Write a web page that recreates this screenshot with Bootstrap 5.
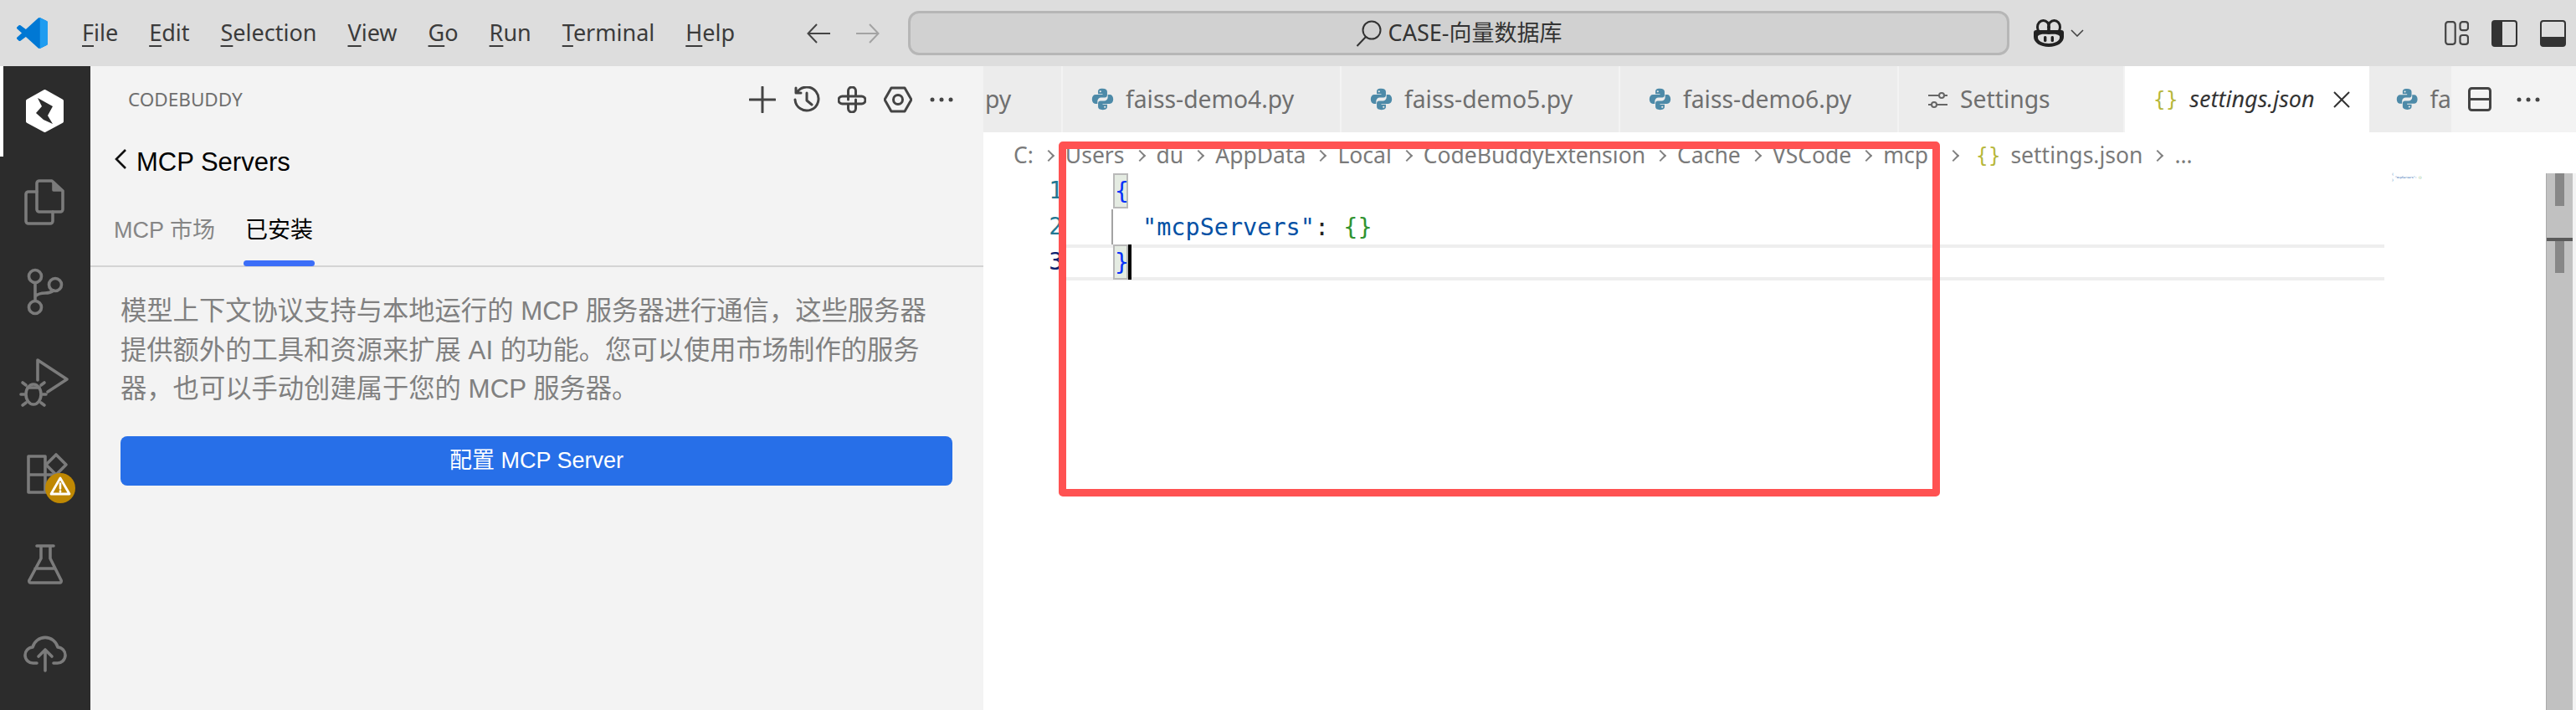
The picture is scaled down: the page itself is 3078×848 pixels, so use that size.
<!DOCTYPE html>
<html lang="en">
<head>
<meta charset="utf-8">
<title>CASE-向量数据库</title>
<link href="https://cdn.jsdelivr.net/npm/bootstrap@5.3.0/dist/css/bootstrap.min.css" rel="stylesheet">
<style>
:root{--ui:"Noto Sans","Noto Sans CJK SC",sans-serif;--ar:"Liberation Sans","Noto Sans CJK SC",sans-serif;}
html,body{margin:0;height:100%;overflow:hidden;background:#fff;}
.shell{width:3078px;height:848px;font-family:var(--ui);}
.tbar{height:79px;background:#ddd;color:#3b3b3b;font-size:27px;}
.vs-logo{width:37px;height:37px;margin-left:20px;}
.menu-items{margin-left:41px;gap:37px;width:780px;}
.menu-items u{text-underline-offset:5px;text-decoration-thickness:2px;}
.nav-arrows{margin-left:86px;gap:30px;width:87px;}
.cmd{width:1316px;height:53px;margin-left:34px;background:#d1d1d1;border:3px solid #b6b6b6;border-radius:13px;color:#333;}
.copilot{margin-left:29px;}
.lay-icons{margin-left:431px;gap:27px;}
.wk{height:769px;}
.activity{width:108px;background:#2c2c2c;}
.act-slot{height:108px;width:108px;}
.act-slot svg{display:block;fill:none;stroke:#7b7b7b;stroke-width:3.6;stroke-linecap:round;stroke-linejoin:round;}
.act-on{box-shadow:inset 4px 0 0 #fff;}
.side{width:1067px;background:#f3f3f3;font-family:var(--ar);}
.side-head{height:79px;padding:0 36px 0 45px;}
.side-title{font-family:var(--ui);font-size:22.5px;color:#6f6f6f;margin:0;}
.side-icons{gap:21px;}
.side-icons svg{fill:none;stroke:#444;stroke-width:3;stroke-linecap:round;stroke-linejoin:round;}
.back-row{height:72px;padding-left:29px;color:#000;font-size:31px;gap:12px;}
.side-tabs{height:89px;border-bottom:2px solid #d4d4d4;padding-left:28px;gap:36px;font-size:27px;}
.stab{height:87px;padding-top:25px;position:relative;color:#868686;}
.stab-on{color:#000;}
.stab-on::after{content:"";position:absolute;left:-2px;right:-2px;bottom:-1px;height:7px;border-radius:4px;background:#3b6ef8;}
.side-desc{margin:30px 0 0 36px;color:#808080;font-size:31.3px;line-height:46.5px;width:985px;}
.cfg-btn{display:block;margin:32px 37px 0 36px;height:59px;width:994px;background:#276fe8;border:0;border-radius:8px;color:#fff;font-size:27px;line-height:59px;padding:0;}
.edgrp{width:1903px;}
.tabstrip{height:79px;background:#f3f3f3;font-size:28.3px;color:#6f6f6f;}
.etab{height:79px;background:#ececec;border-right:2px solid #f3f3f3;padding-left:33px;gap:13px;white-space:nowrap;overflow:hidden;}
.etab-py{width:95px;padding-left:2px;}
.etab-w{width:333px;}
.etab-s{width:270px;padding-left:35px;gap:15px;}
.etab-on{width:292px;background:#fff;border:0;color:#333;font-size:27px;padding-left:34px;gap:14px;}
.etab-fa{width:98px;border:0;padding-left:31px;}
.strip-acts{padding-left:20px;gap:30px;}
.strip-acts svg{fill:none;stroke:#444;stroke-width:3;}
.crumbs{height:49px;padding:7px 0 0 36px;font-size:26.5px;color:#7a7a7a;gap:12px;white-space:nowrap;}
.editor{height:641px;}
.gutter{width:95px;font-family:"DejaVu Sans Mono",monospace;font-size:28px;line-height:42.7px;color:#237893;text-align:right;}
.gutter span{display:block;height:42.7px;}
.gutter .cur{color:#0b216f;}
.code{width:1579px;font-family:"DejaVu Sans Mono",monospace;font-size:28.5px;line-height:44px;}
.cline{height:42.7px;padding-left:60px;white-space:pre;position:relative;}
.cline-mid{padding-left:95px;}
.guide{position:absolute;left:58px;top:0;bottom:0;width:2px;background:#a3a3a3;}
.cline-cur{border-top:4px solid #eee;border-bottom:4px solid #eee;line-height:34px;}
.bm{display:inline-block;width:18px;height:42px;line-height:39px;background:#e4ebe2;border:2px solid #b9b9b9;overflow:visible;color:#0431fa;text-align:center;font-size:28px;vertical-align:top;}
.cline-cur .bm{margin-top:-4px;}
.caret{display:inline-block;width:4px;height:42px;background:#000;vertical-align:top;margin-top:-4px;}
.k{color:#0451a5;}.p{color:#222;}.g{color:#319331;}
.mmap{width:193px;padding:0 0 0 9px;font-family:"DejaVu Sans Mono",monospace;font-size:3.3px;line-height:3.7px;white-space:pre;color:#0451a5;}
.sbar{width:32px;background:#c1c1c1;border-left:1px solid #aaa;position:relative;}
.sb-mark{position:absolute;left:10px;width:11px;background:#878787;}
.sb-m1{top:0;height:39px;}
.sb-m2{top:79px;height:40px;}
.sb-line{position:absolute;left:0;right:0;top:77px;height:4px;background:#5a5a5a;}
.edge{width:4px;background:#f3f3f3;}
.callout{position:absolute;left:1265px;top:169px;width:1053px;height:424px;border:9px solid #ff5252;border-radius:5px;pointer-events:none;}
.sep{display:inline-block;width:10px;height:10px;border-top:2px solid #808080;border-right:2px solid #808080;transform:rotate(45deg);margin:0 3px 0 1px;flex-shrink:0;}
.sep-w{margin:0 10px 0 13px;}
.brc{color:#b7b73b;font-family:"DejaVu Sans Mono",monospace;font-size:24px;letter-spacing:-7px;margin-right:7px;}
</style>
</head>
<body>
<div class="shell position-relative d-flex flex-column">

  <header class="tbar d-flex align-items-center flex-shrink-0">
    <svg class="vs-logo flex-shrink-0" viewBox="0 0 100 100"><path fill="#0078d4" d="M70.9 99.3a6.2 6.2 0 0 0 5-.2l20.6-9.9A6.2 6.2 0 0 0 100 83.5V16.5a6.2 6.2 0 0 0-3.5-5.6L75.9.9a6.2 6.2 0 0 0-7.1 1.2L29.4 38 12.2 25a4.2 4.2 0 0 0-5.3.2l-5.5 5a4.2 4.2 0 0 0 0 6.2L16.3 50 1.4 63.6a4.2 4.2 0 0 0 0 6.2l5.5 5a4.2 4.2 0 0 0 5.3.2l17.2-13 39.4 35.9a6.2 6.2 0 0 0 2.1 1.4zM75 27.3 45.1 50 75 72.7z"/><path fill="#1f9cf0" d="M71 99.4a6.2 6.2 0 0 0 4.9-.3l20.6-9.9A6.2 6.2 0 0 0 100 83.5V16.5a6.2 6.2 0 0 0-3.5-5.6L75.9.9A6.2 6.2 0 0 0 71 .6 6 6 0 0 1 75 6v88a6 6 0 0 1-4 5.4z"/></svg>
    <nav class="menu-items d-flex flex-shrink-0">
      <span><u>F</u>ile</span><span><u>E</u>dit</span><span><u>S</u>election</span><span><u>V</u>iew</span><span><u>G</u>o</span><span><u>R</u>un</span><span><u>T</u>erminal</span><span><u>H</u>elp</span>
    </nav>
    <div class="nav-arrows d-flex align-items-center flex-shrink-0">
      <svg width="29" height="24" viewBox="0 0 29 24" fill="none" stroke="#444" stroke-width="2"><path d="M28 12H2M12 1 1.5 12 12 23"/></svg>
      <svg width="28" height="24" viewBox="0 0 28 24" fill="none" stroke="#a3a3a3" stroke-width="2"><path d="M0 12h26M16 1l10.5 11L16 23"/></svg>
    </div>
    <div class="cmd d-flex align-items-center justify-content-center gap-2 flex-shrink-0">
      <svg width="31" height="32" viewBox="0 0 31 32" fill="none" stroke="#333" stroke-width="2"><circle cx="19" cy="12" r="10.5"/><path d="M12 20 1.5 31"/></svg>
      <span>CASE-向量数据库</span>
    </div>
    <svg class="copilot flex-shrink-0" width="36" height="33" viewBox="0 0 36 33"><ellipse cx="11.5" cy="9.5" rx="7" ry="8" fill="none" stroke="#222" stroke-width="3"/><ellipse cx="24.5" cy="9.5" rx="7" ry="8" fill="none" stroke="#222" stroke-width="3"/><path fill="#222" d="M3 13h30a3 3 0 0 1 3 3v5c0 7-8 12-18 12S0 28 0 21v-5a3 3 0 0 1 3-3z"/><path fill="#ddd" d="M5 20c4-3 7-2 13-2s9-1 13 2v2c0 4-6 7-13 7S5 26 5 22z"/><rect x="12" y="20" width="3.4" height="7" rx="1.5" fill="#222"/><rect x="20.6" y="20" width="3.4" height="7" rx="1.5" fill="#222"/></svg>
    <svg class="flex-shrink-0 ms-2" width="16" height="9" viewBox="0 0 16 9" fill="none" stroke="#444" stroke-width="1.6"><path d="M1 1l7 7 7-7"/></svg>
    <div class="lay-icons d-flex align-items-center flex-shrink-0">
      <svg width="29" height="29" viewBox="0 0 29 29" fill="none" stroke="#444" stroke-width="2.2"><rect x="1.2" y="1.2" width="11.5" height="26.6" rx="3"/><rect x="18.5" y="1.2" width="9.5" height="10" rx="3"/><rect x="18.5" y="17" width="9.5" height="10.8" rx="3"/></svg>
      <svg width="31" height="32" viewBox="0 0 31 32"><rect x="1" y="1" width="29" height="30" rx="3" fill="none" stroke="#333" stroke-width="2"/><path fill="#333" d="M1 4a3 3 0 0 1 3-3h9v30H4a3 3 0 0 1-3-3z"/></svg>
      <svg width="31" height="32" viewBox="0 0 31 32"><rect x="1" y="1" width="29" height="30" rx="3" fill="none" stroke="#333" stroke-width="2"/><path fill="#333" d="M1 20h29v8a3 3 0 0 1-3 3H4a3 3 0 0 1-3-3z"/></svg>
    </div>
  </header>

  <div class="wk d-flex">
    <aside class="activity flex-shrink-0">
      <div class="act-slot act-on"><svg width="108" height="108" viewBox="0 0 108 108"><path style="stroke:#fff;fill:#fff;stroke-width:4" d="M53.5 30 74 41.500V66L53.500 77 33 66V41.500z"/><path style="stroke:none;fill:#2c2c2c" d="M45 38 63 48 57 59 63 69 52 64 43 56 50 48z"/></svg></div>
      <div class="act-slot"><svg width="108" height="108" viewBox="0 0 108 108"><path d="M47 29h15l13 12v22a3 3 0 0 1-3 3H47a3 3 0 0 1-3-3V32a3 3 0 0 1 3-3z"/><path style="fill:#7b7b7b" d="M64 31v9h9z"/><path d="M44 42H34a3 3 0 0 0-3 3v32a3 3 0 0 0 3 3h26a3 3 0 0 0 3-3V66"/></svg></div>
      <div class="act-slot"><svg width="108" height="108" viewBox="0 0 108 108"><circle cx="42" cy="35" r="7.500"/><circle cx="42" cy="72" r="7.500"/><circle cx="66" cy="45" r="7.500"/><path d="M42 42.500V64M42 59c3-3 6-4 12-4 5 0 8-1.500 10-3"/></svg></div>
      <div class="act-slot"><svg width="108" height="108" viewBox="0 0 108 108"><path d="M45 51V27L80 50 57 65"/><ellipse cx="40" cy="68" rx="9" ry="12"/><path d="M31 57l-4-3M49 57l4-3M29 68h-4M51 68h4M31 78l-4 3M49 78l4 3M33 60h14"/></svg></div>
      <div class="act-slot"><svg width="108" height="108" viewBox="0 0 108 108"><path d="M34 34h20v43H34zM34 56h32M54 56v21h12V56"/><path d="M67 32 79 44 67 56 55 44z"/><circle cx="72" cy="72" r="18" style="fill:#bf8803;stroke:none"/><path style="stroke:#fff;stroke-width:2.800" d="M72 60 61 79h22z"/><path style="stroke:#fff;stroke-width:2.600" d="M72 66.500v6M72 75.500v1"/></svg></div>
      <div class="act-slot"><svg width="108" height="108" viewBox="0 0 108 108"><path d="M44 33h20M49 33v15L35 74a2 2 0 0 0 2 3h34a2 2 0 0 0 2-3L60 48V33M42 60h24"/></svg></div>
      <div class="act-slot"><svg width="108" height="108" viewBox="0 0 108 108"><path d="M44 65H40a9.500 9.500 0 0 1-1-19 15.500 15.500 0 0 1 30 0 9.500 9.500 0 0 1-1 19H64"/><path d="M54 74V49M46 57l8-8 8 8"/></svg></div>
    </aside>

    <section class="side flex-shrink-0">
      <div class="side-head d-flex align-items-center justify-content-between">
        <h2 class="side-title fw-normal">CODEBUDDY</h2>
        <div class="side-icons d-flex align-items-center">
          <svg width="32" height="32" viewBox="0 0 32 32"><path d="M16 1v30M1 16h30"/></svg>
          <svg width="32" height="32" viewBox="0 0 32 32"><path d="M4.500 7A14 14 0 1 1 2 16M3 2v6h6M16 8v9l6 5"/></svg>
          <svg width="34" height="32" viewBox="0 0 34 32"><path d="M12.500 16V5.500a4.500 4.500 0 0 1 9 0V12M12.500 12h16a4.500 4.500 0 0 1 0 9H22M21.500 16v10.500a4.500 4.500 0 0 1-9 0V21M21.500 21h-16a4.500 4.500 0 0 1 0-9H12"/></svg>
          <svg width="34" height="32" viewBox="0 0 34 32"><path d="M9 2h16l8 14-8 14H9L1 16z"/><circle cx="17" cy="16" r="5.500"/></svg>
          <svg width="28" height="6" viewBox="0 0 28 6"><g style="fill:#444;stroke:none"><circle cx="3" cy="3" r="2.500"/><circle cx="14" cy="3" r="2.500"/><circle cx="25" cy="3" r="2.500"/></g></svg>
        </div>
      </div>
      <div class="back-row d-flex align-items-center">
        <svg width="14" height="24" viewBox="0 0 14 24" fill="none" stroke="#111" stroke-width="2.600" class="mb-2"><path d="M13 1 2 12l11 11"/></svg>
        <span>MCP Servers</span>
      </div>
      <div class="side-tabs d-flex">
        <div class="stab">MCP 市场</div>
        <div class="stab stab-on">已安装</div>
      </div>
      <p class="side-desc">模型上下文协议支持与本地运行的 MCP 服务器进行通信，这些服务器提供额外的工具和资源来扩展 AI 的功能。您可以使用市场制作的服务器，也可以手动创建属于您的 MCP 服务器。</p>
      <button type="button" class="cfg-btn">配置 MCP Server</button>
    </section>

    <main class="edgrp d-flex flex-column">
      <div class="tabstrip d-flex">
        <div class="etab etab-py d-flex align-items-center justify-content-start">py</div>
        <div class="etab etab-w d-flex align-items-center"><svg width="29" height="29" viewBox="0 0 16 16"><use href="#py"/></svg><span>faiss-demo4.py</span></div>
        <div class="etab etab-w d-flex align-items-center"><svg width="29" height="29" viewBox="0 0 16 16"><use href="#py"/></svg><span>faiss-demo5.py</span></div>
        <div class="etab etab-w d-flex align-items-center"><svg width="29" height="29" viewBox="0 0 16 16"><use href="#py"/></svg><span>faiss-demo6.py</span></div>
        <div class="etab etab-s d-flex align-items-center"><svg width="23" height="24" viewBox="0 0 23 24" fill="none" stroke="#666" stroke-width="2"><path d="M0 7h13M19 7h4M0 18h4M10 18h13"/><circle cx="16" cy="7" r="3"/><circle cx="7" cy="18" r="3"/></svg><span>Settings</span></div>
        <div class="etab etab-on d-flex align-items-center"><span class="brc">{ }</span><em>settings.json</em><svg class="ms-2" width="20" height="20" viewBox="0 0 20 20" fill="none" stroke="#333" stroke-width="2"><path d="M1 1l18 18M19 1 1 19"/></svg></div>
        <div class="etab etab-fa d-flex align-items-center"><svg width="29" height="29" viewBox="0 0 16 16"><use href="#py"/></svg><span>fa</span></div>
        <div class="strip-acts d-flex align-items-center">
          <svg width="28" height="29" viewBox="0 0 28 29"><rect x="1.500" y="1.500" width="25" height="26" rx="3"/><path d="M1.500 14.500h25"/></svg>
          <svg width="28" height="6" viewBox="0 0 28 6"><g style="fill:#444;stroke:none"><circle cx="3" cy="3" r="2.500"/><circle cx="14" cy="3" r="2.500"/><circle cx="25" cy="3" r="2.500"/></g></svg>
        </div>
      </div>
      <div class="crumbs d-flex align-items-center">
        <span>C:</span><i class="sep"></i><span>Users</span><i class="sep"></i><span>du</span><i class="sep"></i><span>AppData</span><i class="sep"></i><span>Local</span><i class="sep"></i><span>CodeBuddyExtension</span><i class="sep"></i><span>Cache</span><i class="sep"></i><span>VSCode</span><i class="sep"></i><span>mcp</span><i class="sep sep-w"></i><span class="brc">{ }</span><span>settings.json</span><i class="sep"></i><span>...</span>
      </div>
      <div class="editor d-flex">
        <div class="gutter flex-shrink-0"><span>1</span><span>2</span><span class="cur">3</span></div>
        <div class="code flex-shrink-0">
          <div class="cline"><span class="bm">{</span></div>
          <div class="cline cline-mid"><i class="guide"></i><span class="k">"mcpServers"</span><span class="p">: </span><span class="g">{}</span></div>
          <div class="cline cline-cur"><span class="bm">}</span><span class="caret"></span></div>
        </div>
        <div class="mmap flex-shrink-0">{
  <span class="k">"mcpServers"</span>: <span class="g">{}</span>
}</div>
        <div class="sbar flex-shrink-0"><i class="sb-mark sb-m1"></i><i class="sb-mark sb-m2"></i><i class="sb-line"></i></div>
        <div class="edge flex-shrink-0"></div>
      </div>
    </main>
  </div>

  <div class="callout"></div>

  <svg width="0" height="0" class="position-absolute"><defs>
    <g id="py"><path fill="#4d8aa8" d="M7.900 1C5.600 1 5 1.900 5 3V4.500H8V5H3.400C2 5 1 6.100 1 8C1 9.900 2 11 3.300 11H4.600V9.300C4.600 8 5.700 6.900 7 6.900H9.500C10.400 6.900 11 6.200 11 5.400V3C11 1.800 10 1 7.900 1Z"/><path fill="#4d8aa8" d="M8.100 15C10.400 15 11 14.100 11 13V11.500H8V11H12.600C14 11 15 9.900 15 8C15 6.100 14 5 12.700 5H11.400V6.700C11.400 8 10.300 9.100 9 9.100H6.500C5.600 9.100 5 9.800 5 10.600V13C5 14.200 6 15 8.100 15Z"/><circle cx="6.500" cy="2.900" r=".6" fill="#ececec"/><circle cx="9.500" cy="13.100" r=".6" fill="#ececec"/></g>
  </defs></svg>
</div>
<script src="https://cdn.jsdelivr.net/npm/bootstrap@5.3.0/dist/js/bootstrap.bundle.min.js"></script>
</body>
</html>
